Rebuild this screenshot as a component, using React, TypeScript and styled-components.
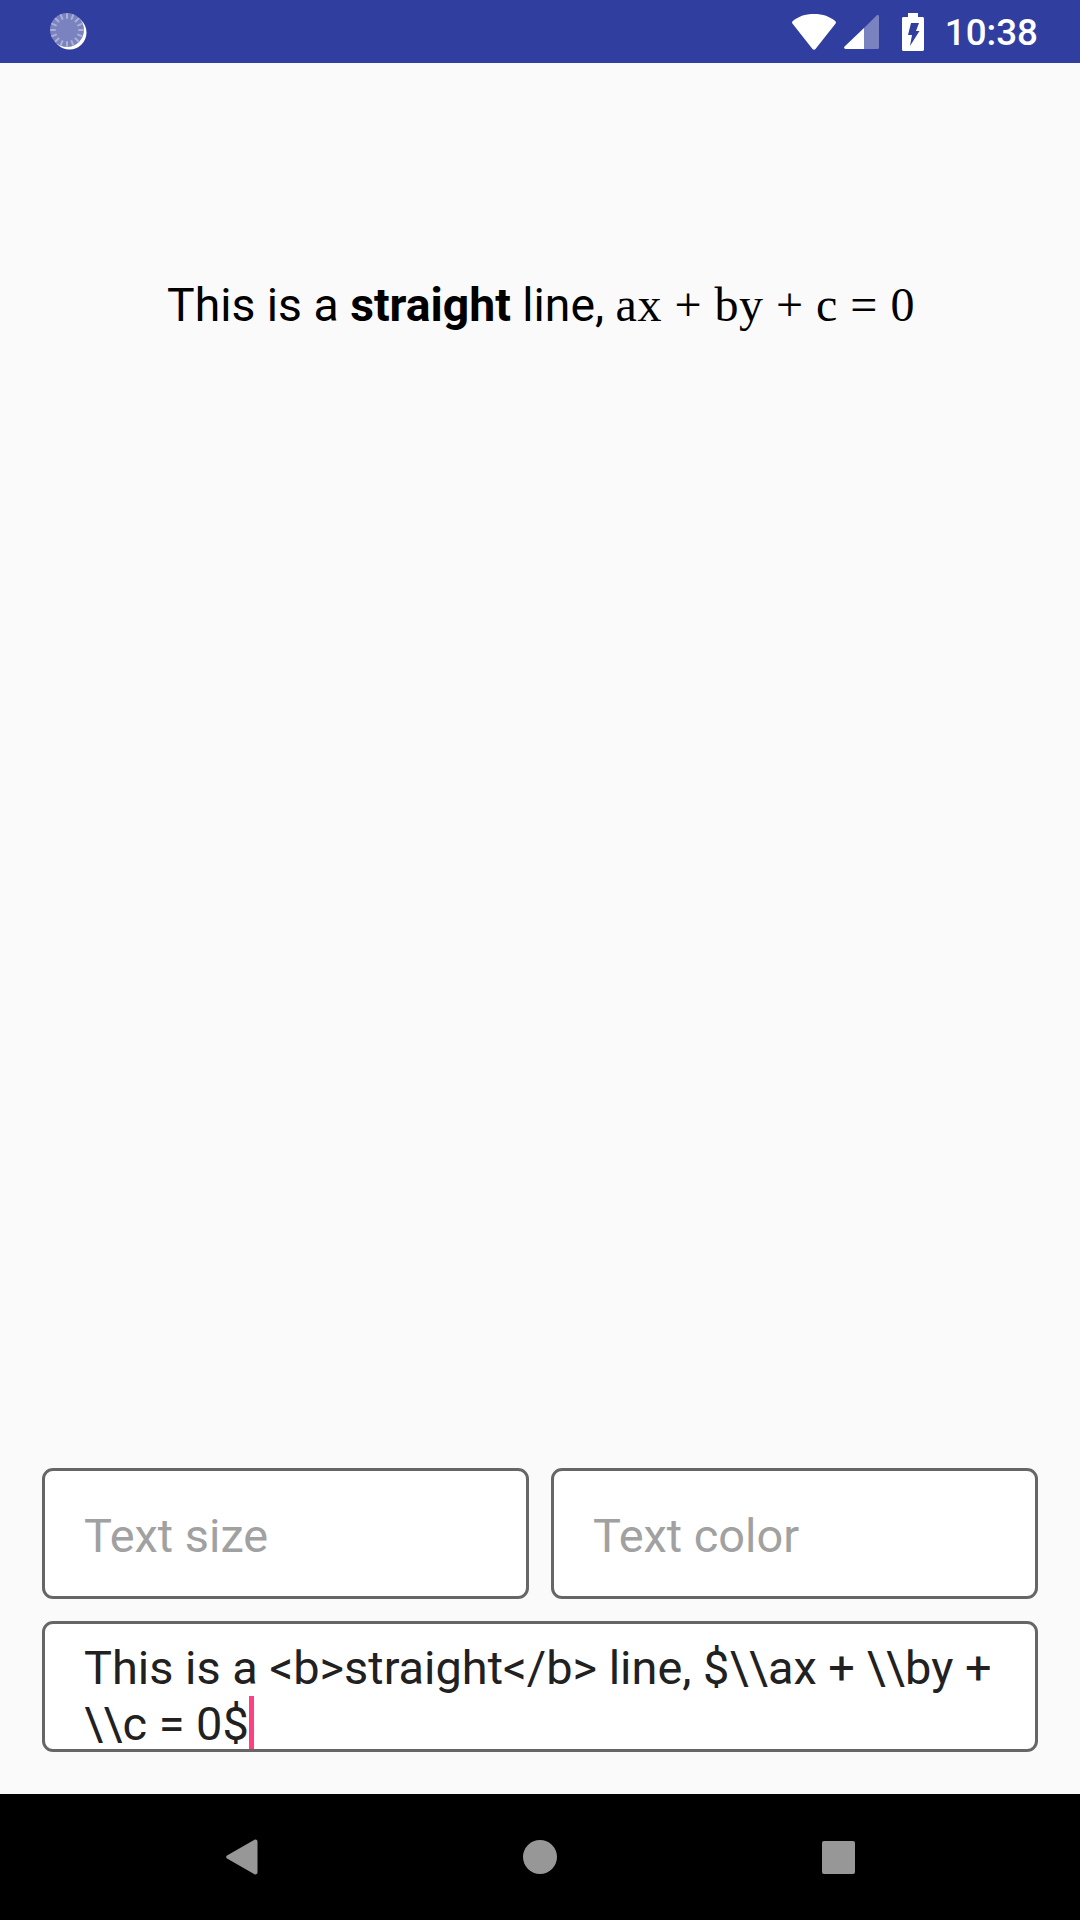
import React from "react";
import styled, { createGlobalStyle } from "styled-components";

const Global = createGlobalStyle`
  html, body { margin: 0; padding: 0; background: #fafafa; }
  #root { width: 1080px; height: 1920px; }
`;

const Screen = styled.div`
  width: 1080px;
  height: 1920px;
  display: flex;
  flex-direction: column;
  background: #fafafa;
  font-family: Roboto, sans-serif;
  overflow: hidden;
`;

const StatusBar = styled.div`
  height: 63px;
  flex: none;
  display: flex;
  align-items: center;
  background: #303f9f;
  padding: 0 42px 0 50px;
`;

const StatusRight = styled.div`
  margin-left: auto;
  display: flex;
  align-items: center;
`;

const Clock = styled.span`
  margin-left: 21px;
  padding-top: 2px;
  color: #fff;
  font-size: 36.75px;
  font-weight: 500;
  line-height: 61px;
`;

const Icon = styled.svg<{ $gap?: number }>`
  display: block;
  flex: none;
  margin-left: ${(p) => p.$gap ?? 0}px;
`;

const Content = styled.main`
  flex: 1;
  display: flex;
  flex-direction: column;
`;

const Preview = styled.div`
  flex: 1;
  padding: 214px 0 0 2px;
  text-align: center;
  font-size: 46.3px;
  line-height: 56px;
  color: #000;
`;

const Bold = styled.b`
  font-weight: 700;
`;

const Formula = styled.span`
  font-family: "Liberation Serif", serif;
  font-size: 48px;
  letter-spacing: 0.5px;
`;

const Form = styled.div`
  display: flex;
  flex-direction: column;
  gap: 22px;
  padding: 0 42px 42px;
`;

const Row = styled.div`
  display: flex;
  gap: 22px;
`;

const Field = styled.div`
  flex: 1;
  height: 131px;
  box-sizing: border-box;
  border: 3px solid #666;
  border-radius: 11px;
  background: #fff;
  padding: 0 24px 0 39px;
  font-size: 46.9px;
  line-height: 56px;
  color: #212121;
  overflow: hidden;
`;

const Placeholder = styled(Field)`
  padding-top: 37px;
  color: #a1a1a1;
`;

const Multi = styled(Field)`
  flex: none;
  padding-top: 16px;
`;

const CaretAnchor = styled.span`
  position: relative;
`;

const Caret = styled.span`
  position: absolute;
  left: 0;
  top: 0;
  width: 5px;
  height: 65px;
  background: #ff4081;
`;

const NavBar = styled.nav`
  height: 126px;
  flex: none;
  background: #000;
  display: flex;
  align-items: center;
  justify-content: center;
`;

const NavSlot = styled.div`
  width: 298px;
  display: flex;
  justify-content: center;
`;

export default function App() {
  return (
    <Screen>
      <Global />
      <StatusBar>
        <Icon width="37" height="37" viewBox="0 0 37 37">
          <circle cx="19.500" cy="19.500" r="17" fill="#fff" />
          <circle cx="17" cy="17" r="17" fill="#7a83bf" />
          <g stroke="#aab0d6" strokeWidth="2" strokeLinecap="round">
            {Array.from({ length: 16 }).map((_, i) => {
              const a = (i * Math.PI) / 8;
              return (
                <line
                  key={i}
                  x1={17 + Math.cos(a) * 12}
                  y1={17 + Math.sin(a) * 12}
                  x2={17 + Math.cos(a) * 16}
                  y2={17 + Math.sin(a) * 16}
                />
              );
            })}
          </g>
        </Icon>
        <StatusRight>
          <Icon width="44" height="36" viewBox="0 0 44 36">
            <path d="M22 0C13 0 6 2.600 0.600 7.200c-.7.6-.7 1.600-.2 2.200L20.500 35c.8 1 2.200 1 3 0L43.600 9.400c.5-.7.5-1.600-.2-2.200C38 2.600 31 0 22 0z" fill="#fff" />
          </Icon>
          <Icon $gap={8} width="35" height="34" viewBox="0 0 35 34">
            <path d="M20 0v34h13.500c.8 0 1.500-.7 1.500-1.500V1.500C35 .2 33.600-.4 32.600.6L20 13z" fill="#7a83bf" />
            <path d="M20 13 .6 31.400C-.4 32.400.2 34 1.500 34H20z" fill="#fff" />
          </Icon>
          <Icon $gap={23} width="22" height="38" viewBox="0 0 22 38">
            <path
              fillRule="evenodd"
              d="M6 0h10v4h4.500c.8 0 1.500.7 1.500 1.500v31c0 .8-.7 1.500-1.500 1.500h-19C.7 38 0 37.300 0 36.500v-31C0 4.700.7 4 1.500 4H6zM9 10h8l-3 8h3.500L8 33l2-11H6z"
              fill="#fff"
            />
          </Icon>
          <Clock>10:38</Clock>
        </StatusRight>
      </StatusBar>
      <Content>
        <Preview>
          This is a <Bold>straight</Bold> line, <Formula>ax + by + c = 0</Formula>
        </Preview>
        <Form>
          <Row>
            <Placeholder>Text size</Placeholder>
            <Placeholder>Text color</Placeholder>
          </Row>
          <Multi>
            This is a &lt;b&gt;straight&lt;/b&gt; line, $\\ax + \\by + \\c = 0$
            <CaretAnchor>
              <Caret />
            </CaretAnchor>
          </Multi>
        </Form>
      </Content>
      <NavBar>
        <NavSlot>
          <Icon width="32" height="36" viewBox="0 0 32 36">
            <path d="M28.500.8 1 16.400c-1.200 .8-1.200 2.400 0 3.200l27.500 15.600c1.400 .8 3-.2 3-1.600V2.400c0-1.400-1.600-2.400-3-1.600z" fill="#979797" />
          </Icon>
        </NavSlot>
        <NavSlot>
          <Icon width="34" height="34" viewBox="0 0 34 34">
            <circle cx="17" cy="17" r="17" fill="#979797" />
          </Icon>
        </NavSlot>
        <NavSlot>
          <Icon width="33" height="33" viewBox="0 0 33 33">
            <rect width="33" height="33" rx="2" fill="#979797" />
          </Icon>
        </NavSlot>
      </NavBar>
    </Screen>
  );
}
